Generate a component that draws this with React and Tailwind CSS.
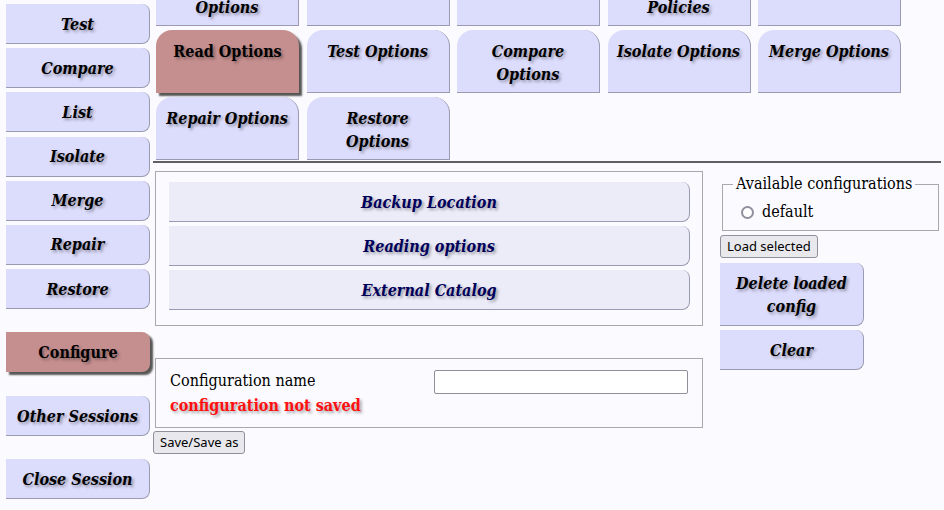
const SERIF = { fontFamily: '"DejaVu Serif Condensed", "DejaVu Serif", serif' };

const SIDE = ['Test', 'Compare', 'List', 'Isolate', 'Merge', 'Repair', 'Restore'];

const TABS = [
  { label: ['Archive', 'Options'] },
  { label: ['Create Options'] },
  { label: ['Filter Options'] },
  { label: ['Compression', 'Policies'] },
  { label: ['Extract Options'] },
  { label: ['Read Options'], active: true },
  { label: ['Test Options'] },
  { label: ['Compare', 'Options'] },
  { label: ['Isolate Options'] },
  { label: ['Merge Options'] },
  { label: ['Repair Options'] },
  { label: ['Restore', 'Options'] },
];

const shadowText = '[text-shadow:2px_2px_3px_rgba(0,0,0,0.35)]';

function SideButton({ children, active, className = '' }) {
  return (
    <div
      className={
        'flex h-[40px] w-[144px] items-center justify-center rounded-r-[8px] pt-[2px] text-[16px] font-bold text-black ' +
        shadowText +
        ' ' +
        (active
          ? 'bg-[#c68f8f] shadow-[3px_3px_2px_#555]'
          : 'italic border-r border-b border-[#9a9ab2] bg-[#dcdcfc]') +
        ' ' +
        className
      }
      style={SERIF}
    >
      {children}
    </div>
  );
}

function Tab({ label, active }) {
  return (
    <div
      className={
        'h-[63px] w-[143px] rounded-t-[16px] pt-[10px] text-center text-[16px] leading-[23px] font-bold text-black ' +
        shadowText +
        ' ' +
        (active
          ? 'bg-[#c68f8f] shadow-[3px_3px_2px_#555]'
          : 'italic border-r border-b border-[#9a9ab2] bg-[#dcdcfc]')
      }
      style={SERIF}
    >
      {label.map((l) => (
        <div key={l}>{l}</div>
      ))}
    </div>
  );
}

function Bar({ children }) {
  return (
    <div
      className={
        'flex h-[40px] w-[521px] items-center justify-center rounded-r-[8px] border-r border-b border-[#9a9ab2] bg-[#ececf9] pt-[2px] text-[16px] font-bold italic text-[#00005a] ' +
        shadowText
      }
      style={SERIF}
    >
      {children}
    </div>
  );
}

function NativeButton({ children, className = '' }) {
  return (
    <button
      type="button"
      className={
        'h-[23px] rounded-[3px] border border-[#8f8f9d] bg-[#e9e9ed] px-[6px] text-[13px] text-black ' +
        className
      }
      style={{ fontFamily: '"Noto Sans", "Open Sans", sans-serif' }}
    >
      {children}
    </button>
  );
}

export default function App() {
  return (
    <div className="flex h-[510px] w-[944px] overflow-hidden bg-[#fbfbff]">
      <div className="flex w-[153px] shrink-0 flex-col pl-[6px] pt-[4px]">
        <div className="flex flex-col gap-[4.2px]">
          {SIDE.map((s) => (
            <SideButton key={s}>{s}</SideButton>
          ))}
        </div>
        <SideButton active className="mt-[23px]">
          Configure
        </SideButton>
        <SideButton className="mt-[24px]">Other Sessions</SideButton>
        <SideButton className="mt-[23px]">Close Session</SideButton>
      </div>

      <div className="flex flex-1 flex-col">
        <div className="h-[161px] overflow-hidden pl-[3px]">
          <div className="-mt-[37px] grid grid-cols-[repeat(5,143px)] gap-x-[7.5px] gap-y-[4px]">
            {TABS.map((t, i) => (
              <Tab key={i} label={t.label} active={t.active} />
            ))}
          </div>
        </div>
        <div className="mr-[3px] h-[2px] bg-[#5f5f66]" />

        <div className="flex">
          <div className="flex w-[565px] flex-col pl-[2px]">
            <div className="mt-[8px] flex h-[155px] w-[548px] flex-col gap-[4px] border border-[#a8a8b0] pl-[13px] pt-[10px]">
              <Bar>Backup Location</Bar>
              <Bar>Reading options</Bar>
              <Bar>External Catalog</Bar>
            </div>

            <div
              className="mt-[32px] flex h-[70px] w-[548px] border border-[#a8a8b0] pl-[14px] pt-[9px]"
              style={SERIF}
            >
              <div className="w-[264px]">
                <div className="text-[16px] leading-[25px] text-black">Configuration name</div>
                <div className="text-[16px] leading-[25px] font-bold text-[#ff1010] [text-shadow:2px_2px_3px_rgba(0,0,0,0.35)]">
                  configuration not saved
                </div>
              </div>
              <input
                type="text"
                className="mt-[2px] h-[24px] w-[254px] rounded-[2px] border border-[#8f8f9d] bg-white"
              />
            </div>
            <div className="-ml-[2px] mt-[1px]">
              <NativeButton>Save/Save as</NativeButton>
            </div>
          </div>

          <div className="flex flex-col pl-[2px] pt-[11px]">
            <fieldset
              className="ml-[2px] h-[57px] w-[217px] border border-[#a8a8b0] px-[10px]"
              style={SERIF}
            >
              <legend className="px-[3px] text-[16px] leading-[20px] text-black">
                Available configurations
              </legend>
              <label className="mt-[8px] flex items-center gap-[8px] pl-[8px] text-[16px] leading-[20px] text-black">
                <span className="h-[13px] w-[13px] rounded-full border-2 border-[#8f8f9d] bg-white" />
                default
              </label>
            </fieldset>
            <div className="mt-[2px]">
              <NativeButton>Load selected</NativeButton>
            </div>
            <div
              className={
                'mt-[5px] flex h-[63px] w-[144px] items-center justify-center rounded-r-[8px] border-r border-b border-[#9a9ab2] bg-[#dcdcfc] pt-[2px] text-center text-[16px] leading-[23px] font-bold italic text-black ' +
                shadowText
              }
              style={SERIF}
            >
              Delete loaded
              <br />
              config
            </div>
            <SideButton className="mt-[4px]">Clear</SideButton>
          </div>
        </div>
      </div>
    </div>
  );
}
